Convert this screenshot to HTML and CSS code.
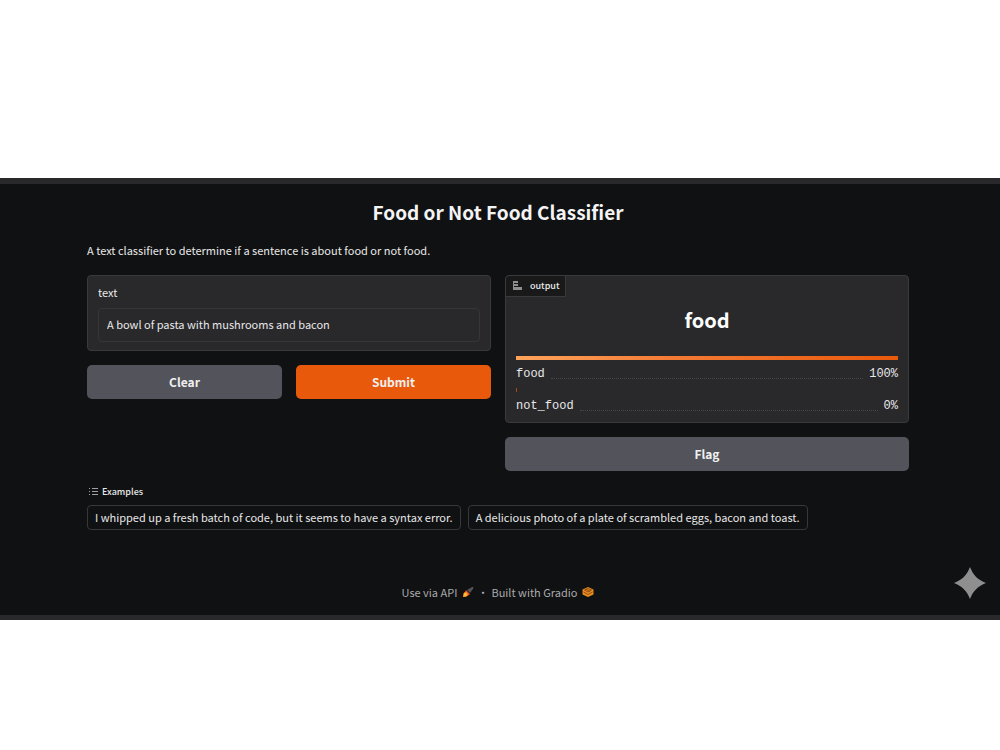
FILE: index.html
```
<!DOCTYPE html>
<html lang="en">
<head>
    <meta charset="UTF-8">
    <meta name="viewport" content="width=device-width, initial-scale=1.0">
    <title>Food or Not Food Classifier</title>
    <link rel="stylesheet" href="styles.css">
</head>
<body>

<div class="app">
    <main class="container">
        <h1>Food or Not Food Classifier</h1>
        <p class="description">A text classifier to determine if a sentence is about food or not food.</p>

        <div class="columns">
            <form class="column" onsubmit="return false">
                <div class="block text-block">
                    <label for="text">text</label>
                    <input id="text" name="text" type="text" value="A bowl of pasta with mushrooms and bacon">
                </div>
                <div class="buttons">
                    <button type="reset" class="btn">Clear</button>
                    <button type="submit" class="btn btn-primary">Submit</button>
                </div>
            </form>

            <div class="column">
                <section class="block output-block">
                    <div class="output-label">
                        <svg width="10" height="10" viewBox="0 0 10 10" fill="#8f8f91" aria-hidden="true">
                            <path d="M0 0h5v2H1v1h4v2H1v1h8v3H0z"/>
                        </svg>
                        <span>output</span>
                    </div>
                    <h2>food</h2>
                    <div class="result">
                        <div class="bar" style="width: 100%"></div>
                        <div class="result-row">
                            <span>food</span>
                            <span class="dots"></span>
                            <span>100%</span>
                        </div>
                    </div>
                    <div class="result">
                        <div class="bar bar-empty" style="width: 0%"></div>
                        <div class="result-row">
                            <span>not_food</span>
                            <span class="dots"></span>
                            <span>0%</span>
                        </div>
                    </div>
                </section>
                <button type="button" class="btn">Flag</button>
            </div>
        </div>

        <section class="examples">
            <div class="examples-label">
                <svg width="9" height="10" viewBox="0 0 9 10" fill="none" stroke="#a0a0a2" aria-hidden="true">
                    <path d="M3 1.500h6M3 4.500h6M3 7.500h6M0 1.500h1M0 4.500h1M0 7.500h1"/>
                </svg>
                <span>Examples</span>
            </div>
            <div class="example-list">
                <button type="button" class="example">I whipped up a fresh batch of code, but it seems to have a syntax error.</button>
                <button type="button" class="example">A delicious photo of a plate of scrambled eggs, bacon and toast.</button>
            </div>
        </section>
    </main>

    <footer>
        <a href="#">Use via API
            <svg width="12" height="12" viewBox="0 0 12 12" aria-hidden="true">
                <path d="M5 4 10 1h1.500L11 3 8 7z" fill="#505258"/>
                <path d="M4 4 8 8 6.500 9.500 3 6z" fill="#e0432b"/>
                <path d="M4 5.500C1.500 6 1 8 1 11c3 0 5-.5 5.500-3z" fill="#ff8a16"/>
                <circle cx="3.500" cy="8.500" r="1.500" fill="#ffc044"/>
            </svg>
        </a>
        <span class="dot">·</span>
        <a href="#">Built with Gradio
            <svg width="12" height="12" viewBox="0 0 12 12" aria-hidden="true">
                <path d="M6 1 11.500 3.500v5L6 11 .5 8.500v-5z" fill="#e98b1d"/>
                <path d="M6 2.500 9.500 4 6 6 2.500 4zM1.500 6 6 8.500 10.500 6M4 3l4 2.500" fill="none" stroke="#784416" stroke-width=".8"/>
            </svg>
        </a>
    </footer>

    <svg class="sparkle" width="32" height="32" viewBox="0 0 32 32" fill="#8f8f8f" aria-hidden="true">
        <path d="M16 0C19 8 24 13 32 16 24 19 19 24 16 32 13 24 8 19 0 16 8 13 13 8 16 0z"/>
    </svg>
</div>

</body>
</html>
```

FILE: styles.css
```
* {
    margin: 0;
    padding: 0;
    box-sizing: border-box;
}

body {
    font-family: 'Noto Sans CJK SC', 'Open Sans', sans-serif;
    font-size: 11px;
    line-height: 16px;
    background-color: #ffffff;
    color: #e8e8e9;
    padding-top: 178px;
}

button, input {
    font: inherit;
    color: inherit;
}

.app {
    position: relative;
    background-color: #101112;
    border-top: 6px solid #29292b;
    border-bottom: 5px solid #29292b;
    padding: 13px 91px 15px 87px;
}

h1 {
    font-size: 19px;
    line-height: 30px;
    font-weight: bold;
    text-align: center;
    color: #f4f4f5;
    margin-bottom: 15px;
}

.description {
    margin-bottom: 17px;
}

.columns {
    display: grid;
    grid-template-columns: 1fr 1fr;
    gap: 14px;
}

.column {
    display: flex;
    flex-direction: column;
    gap: 14px;
}

.block {
    background-color: #29292b;
    border: 1px solid #3a3a3d;
    border-radius: 4px;
}

.text-block {
    padding: 8px 10px;
}

.text-block label {
    display: block;
    margin-bottom: 8px;
}

.text-block input {
    display: block;
    width: 100%;
    height: 34px;
    padding: 0 8px 2px;
    background-color: #29292b;
    border: 1px solid #363639;
    border-radius: 4px;
}

.buttons {
    display: flex;
    gap: 14px;
}

.btn {
    flex: 1;
    min-height: 34px;
    border: none;
    border-radius: 5px;
    background-color: #53535b;
    color: #f0f0f0;
    font-size: 12px;
    line-height: 20px;
    font-weight: bold;
    cursor: pointer;
}

.btn-primary {
    background-color: #e9590c;
}

.output-block {
    padding: 0 10px 8px;
}

.output-label {
    display: flex;
    align-items: center;
    gap: 7px;
    width: 60px;
    height: 21px;
    margin-left: -10px;
    padding-left: 7px;
    background-color: #19191a;
    border-right: 1px solid #3a3a3d;
    border-bottom: 1px solid #3a3a3d;
    border-radius: 4px 0 0 0;
    font-size: 9px;
    font-weight: 500;
}

h2 {
    font-size: 20px;
    line-height: 30px;
    text-align: center;
    color: #ffffff;
    margin: 8px 0 21px;
}

.result {
    font-family: 'Liberation Mono', monospace;
    font-size: 12px;
}

.result + .result {
    margin-top: 6px;
}

.bar {
    height: 4px;
    min-width: 1px;
    margin-bottom: 6px;
    background: linear-gradient(to right, #ffa45c, #f47b35 40%, #e9590c);
}

.bar-empty {
    background: #a84a17;
}

.result-row {
    display: flex;
    align-items: center;
    gap: 6px;
}

.dots {
    flex: 1;
    margin-top: 8px;
    border-top: 1px dotted #48484b;
}

.examples {
    margin-top: 13px;
}

.examples-label {
    display: flex;
    align-items: center;
    gap: 4px;
    margin-bottom: 5px;
    padding-left: 2px;
    font-size: 9px;
    font-weight: 500;
}

.example-list {
    display: flex;
    flex-wrap: wrap;
    gap: 7px;
}

.example {
    height: 25px;
    padding: 0 7px 2px;
    background-color: #101112;
    border: 1px solid #38383a;
    border-radius: 4px;
    cursor: pointer;
}

footer {
    display: flex;
    justify-content: center;
    gap: 3px;
    margin-top: 54px;
    color: #aaaaac;
}

footer a {
    display: flex;
    align-items: center;
    gap: 5px;
    color: inherit;
    text-decoration: none;
}

.sparkle {
    position: absolute;
    right: 14px;
    bottom: 16px;
}
```
